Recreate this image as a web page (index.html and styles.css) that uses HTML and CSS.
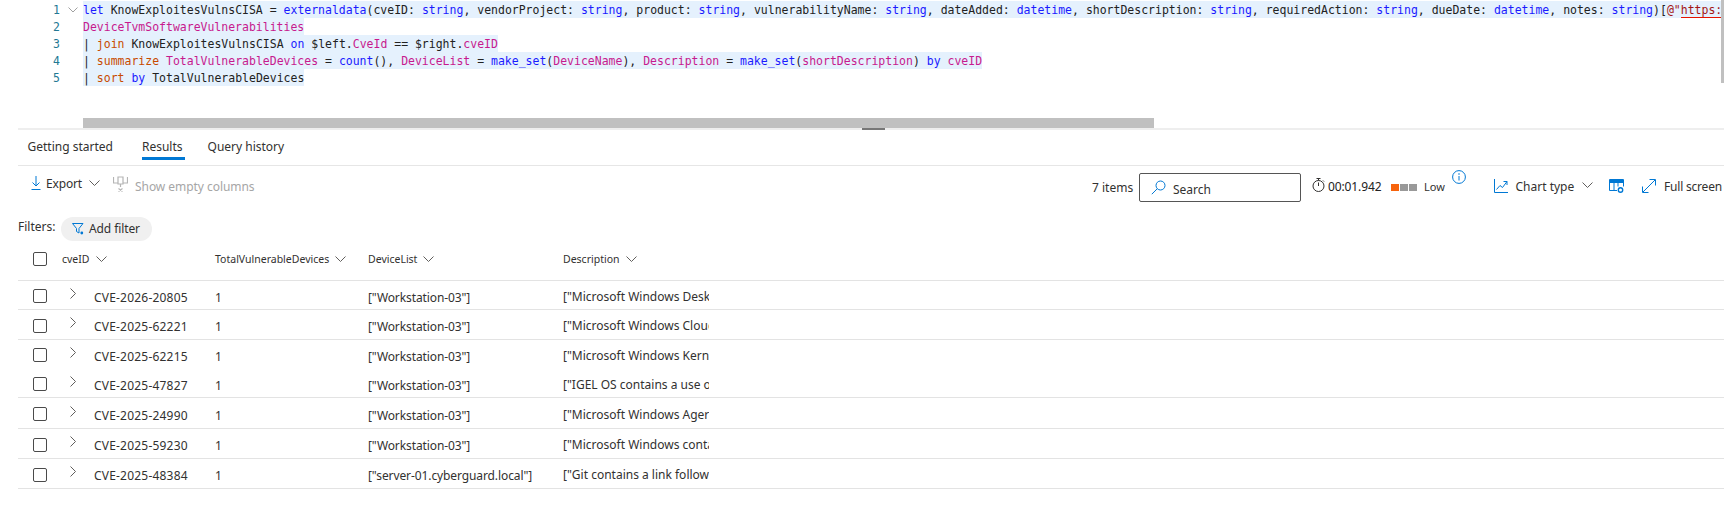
FILE: index.html
```html
<!DOCTYPE html>
<html lang="en">
<head>
<meta charset="utf-8">
<title>Advanced hunting</title>
<link rel="stylesheet" href="styles.css">
</head>
<body>
<div class="editor">
  <div class="code">
    <div class="line"><span class="num">1</span><svg class="fold" width="10" height="6" viewBox="0 0 10 6"><path d="M.5.5 5 5 9.5.5" fill="none" stroke="#a0a0a0"/></svg><div class="src"><span class="sel"><span class="b">let</span> <span class="k">KnowExploitesVulnsCISA</span> = <span class="b">externaldata</span>(<span class="k">cveID</span>: <span class="b">string</span>, <span class="k">vendorProject</span>: <span class="b">string</span>, <span class="k">product</span>: <span class="b">string</span>, <span class="k">vulnerabilityName</span>: <span class="b">string</span>, <span class="k">dateAdded</span>: <span class="b">datetime</span>, <span class="k">shortDescription</span>: <span class="b">string</span>, <span class="k">requiredAction</span>: <span class="b">string</span>, <span class="k">dueDate</span>: <span class="b">datetime</span>, <span class="k">notes</span>: <span class="b">string</span>)[<span class="r">@"</span><span class="url">https:</span></span></div></div>
    <div class="line"><span class="num">2</span><span class="nofold"></span><div class="src"><span class="sel"><span class="m">DeviceTvmSoftwareVulnerabilities</span></span></div></div>
    <div class="line"><span class="num">3</span><span class="nofold"></span><div class="src"><span class="sel">| <span class="o">join</span> KnowExploitesVulnsCISA <span class="b">on</span> $left.<span class="m">CveId</span> == $right.<span class="m">cveID</span></span></div></div>
    <div class="line"><span class="num">4</span><span class="nofold"></span><div class="src"><span class="sel">| <span class="o">summarize</span> <span class="m">TotalVulnerableDevices</span> = <span class="b">count</span>(), <span class="m">DeviceList</span> = <span class="b">make_set</span>(<span class="m">DeviceName</span>), <span class="m">Description</span> = <span class="b">make_set</span>(<span class="m">shortDescription</span>) <span class="b">by</span> <span class="m">cveID</span></span></div></div>
    <div class="line"><span class="num">5</span><span class="nofold"></span><div class="src"><span class="sel">| <span class="o">sort</span> <span class="b">by</span> TotalVulnerableDevices</span></div></div>
  </div>
  <div class="vscroll"></div>
</div>
<div class="hscroll"></div>
<div class="sash"><div class="sash-handle"></div></div>

<div class="tabs">
  <span class="tab tab-first">Getting started</span>
  <span class="tab tab-active">Results</span>
  <span class="tab">Query history</span>
</div>

<div class="toolbar">
  <svg class="ic-export" width="10" height="14" viewBox="0 0 10 14"><path d="M5 0v10M1.5 6.5 5 10l3.500-3.500M.5 13.500h9" fill="none" stroke="#0078d4"/></svg>
  <span class="export-label">Export</span>
  <svg class="chev-export" width="11" height="6" viewBox="0 0 11 6"><path d="M.5.5 5.500 5.500 10.500.5" fill="none" stroke="#605e5c"/></svg>
  <svg class="ic-pin" width="15" height="16" viewBox="0 0 15 16"><path d="M.5 1v6h4M14.500 1v6h-4M5 1h5v7H5zM7.500 8v3M5.500 12.500l4 3M9.500 12.500l-4 3" fill="none" stroke="#b5b5b5" stroke-width="1.200"/></svg>
  <span class="empty-label">Show empty columns</span>
  <span class="count">7 items</span>
  <div class="search">
    <svg width="15" height="15" viewBox="0 0 15 15"><circle cx="9.500" cy="5.500" r="4.500" fill="none" stroke="#0078d4"/><path d="M6.200 8.800.8 14.200" stroke="#0078d4" fill="none"/></svg>
    <span class="search-label">Search</span>
  </div>
  <svg class="ic-timer" width="13" height="14" viewBox="0 0 13 14"><circle cx="6.500" cy="8" r="5.500" fill="none" stroke="#323130"/><path d="M6.500 4.500V8M4.500.5h4M6.500.5v2M11 2.500l1 1" fill="none" stroke="#323130"/></svg>
  <span class="time">00:01.942</span>
  <span class="sq sq-on"></span><span class="sq"></span><span class="sq"></span>
  <span class="low">Low</span>
  <svg class="ic-info" width="14" height="14" viewBox="0 0 14 14"><circle cx="7" cy="7" r="6.400" fill="none" stroke="#0078d4"/><path d="M7 6v4.500" stroke="#0078d4"/><circle cx="7" cy="4" r=".8" fill="#0078d4"/></svg>
  <svg class="ic-chart" width="14" height="14" viewBox="0 0 14 14"><path d="M.5 0v13.500H14M2.500 10.500l3.500-4 2.500 2 4.500-6M9.500 2.500h3.500V6" fill="none" stroke="#0078d4"/></svg>
  <span class="chart-label">Chart type</span>
  <svg class="chev-chart" width="11" height="6" viewBox="0 0 11 6"><path d="M.5.5 5.500 5.500 10.500.5" fill="none" stroke="#605e5c"/></svg>
  <svg class="ic-cols" width="15" height="14" viewBox="0 0 15 14"><path d="M.5 11.500V.5h14v7M.5 3.500h14M5 3.500v8M9 3.500v4M.5 11.500H8" fill="none" stroke="#0078d4"/><rect x="1" y="1" width="13" height="2" fill="#0078d4"/><circle cx="11.500" cy="11" r="2.200" fill="none" stroke="#0078d4" stroke-width="1.400"/></svg>
  <svg class="ic-expand" width="14" height="14" viewBox="0 0 14 14"><path d="M1 13 13 1M7.500.5h6v6M.5 7.500v6h6" fill="none" stroke="#0078d4"/></svg>
  <span class="full-label">Full screen</span>
</div>

<div class="filters">
  <span class="filters-label">Filters:</span>
  <div class="pill">
    <svg width="12" height="12" viewBox="0 0 12 12"><path d="M.5.500h10.500L7 5.500V10L4.500 8.500V5.500z" fill="none" stroke="#0078d4"/><circle cx="9.800" cy="10" r="1.400" fill="#0078d4"/></svg>
    <span>Add filter</span>
  </div>
</div>

<div class="table">
  <div class="thead">
    <span class="box box-head"></span>
    <div class="th c-id"><span>cveID</span><svg width="11" height="6" viewBox="0 0 11 6"><path d="M.5.5 5.500 5.500 10.500.5" fill="none" stroke="#605e5c"/></svg></div>
    <div class="th c-total"><span>TotalVulnerableDevices</span><svg width="11" height="6" viewBox="0 0 11 6"><path d="M.5.5 5.500 5.500 10.500.5" fill="none" stroke="#605e5c"/></svg></div>
    <div class="th c-list"><span>DeviceList</span><svg width="11" height="6" viewBox="0 0 11 6"><path d="M.5.5 5.500 5.500 10.500.5" fill="none" stroke="#605e5c"/></svg></div>
    <div class="th c-desc"><span>Description</span><svg width="11" height="6" viewBox="0 0 11 6"><path d="M.5.5 5.500 5.500 10.500.5" fill="none" stroke="#605e5c"/></svg></div>
  </div>
  <div class="row h29">
    <span class="box"></span><svg class="exp" width="6" height="11" viewBox="0 0 6 11"><path d="M.5.500 5.500 5.500.5 10.500" fill="none" stroke="#605e5c"/></svg>
    <span class="cell d-id">CVE-2026-20805</span><span class="cell d-total">1</span><span class="cell d-list">["Workstation-03"]</span><span class="cell d-desc">["Microsoft Windows Desktop Window Manager</span>
  </div>
  <div class="row">
    <span class="box"></span><svg class="exp" width="6" height="11" viewBox="0 0 6 11"><path d="M.5.500 5.500 5.500.5 10.500" fill="none" stroke="#605e5c"/></svg>
    <span class="cell d-id">CVE-2025-62221</span><span class="cell d-total">1</span><span class="cell d-list">["Workstation-03"]</span><span class="cell d-desc">["Microsoft Windows Cloud Files Mini Filter</span>
  </div>
  <div class="row h29 no-line">
    <span class="box"></span><svg class="exp" width="6" height="11" viewBox="0 0 6 11"><path d="M.5.500 5.500 5.500.5 10.500" fill="none" stroke="#605e5c"/></svg>
    <span class="cell d-id">CVE-2025-62215</span><span class="cell d-total">1</span><span class="cell d-list">["Workstation-03"]</span><span class="cell d-desc">["Microsoft Windows Kernel contains a race</span>
  </div>
  <div class="row h29">
    <span class="box"></span><svg class="exp" width="6" height="11" viewBox="0 0 6 11"><path d="M.5.500 5.500 5.500.5 10.500" fill="none" stroke="#605e5c"/></svg>
    <span class="cell d-id">CVE-2025-47827</span><span class="cell d-total">1</span><span class="cell d-list">["Workstation-03"]</span><span class="cell d-desc">["IGEL OS contains a use of a key past its</span>
  </div>
  <div class="row h31">
    <span class="box"></span><svg class="exp" width="6" height="11" viewBox="0 0 6 11"><path d="M.5.500 5.500 5.500.5 10.500" fill="none" stroke="#605e5c"/></svg>
    <span class="cell d-id">CVE-2025-24990</span><span class="cell d-total">1</span><span class="cell d-list">["Workstation-03"]</span><span class="cell d-desc">["Microsoft Windows Agere Modem Driver</span>
  </div>
  <div class="row">
    <span class="box"></span><svg class="exp" width="6" height="11" viewBox="0 0 6 11"><path d="M.5.500 5.500 5.500.5 10.500" fill="none" stroke="#605e5c"/></svg>
    <span class="cell d-id">CVE-2025-59230</span><span class="cell d-total">1</span><span class="cell d-list">["Workstation-03"]</span><span class="cell d-desc">["Microsoft Windows contains an improper</span>
  </div>
  <div class="row">
    <span class="box"></span><svg class="exp" width="6" height="11" viewBox="0 0 6 11"><path d="M.5.500 5.500 5.500.5 10.500" fill="none" stroke="#605e5c"/></svg>
    <span class="cell d-id">CVE-2025-48384</span><span class="cell d-total">1</span><span class="cell d-list">["server-01.cyberguard.local"]</span><span class="cell d-desc">["Git contains a link following vulnerability</span>
  </div>
</div>
</body>
</html>
```

FILE: styles.css
```css
* { box-sizing: border-box; }
html, body { margin: 0; padding: 0; background: #fff; }
body {
  width: 1724px;
  height: 514px;
  overflow: hidden;
  font-family: "Noto Sans", "Open Sans", sans-serif;
  font-size: 12px;
  color: #323130;
}
svg { display: block; flex: none; }

/* editor */
.editor { display: flex; height: 118px; }
.code {
  flex: 1;
  min-width: 0;
  overflow: hidden;
  padding-top: 1px;
  font-family: "DejaVu Sans Mono", "Liberation Mono", monospace;
  font-size: 11.49px;
  color: #222;
}
.vscroll { width: 3px; height: 83px; background: #c0c0c0; }
.line { display: flex; align-items: center; height: 17px; white-space: pre; }
.num { flex: none; width: 60px; padding-top: 1px; text-align: right; color: #237893; }
.fold { margin: 0 5px 0 8px; }
.nofold { width: 23px; flex: none; }
.src { flex: none; }
.sel { display: block; height: 17px; line-height: 19px; background: #e5f1fd; }
.b { color: #1a1aff; }
.k { color: #222; }
.m { color: #c71a8e; }
.o { color: #c84b00; }
.r { color: #a31515; }
.url { color: #a31515; border-bottom: 1px solid #e51400; }
.hscroll { height: 10px; width: 1071px; margin-left: 83px; background: #c0c0c0; }
.sash { height: 2px; margin-left: 18px; background: #eee; }
.sash-handle { width: 23px; height: 2px; margin-left: 844px; background: #777; }

/* tabs */
.tabs {
  display: flex;
  height: 36px;
  margin-left: 18px;
  border-bottom: 1px solid #e6e6e6;
}
.tab { height: 30px; margin-right: 23px; line-height: 33px; white-space: nowrap; }
.tab-first { margin-left: 9.5px; margin-right: 29px; }
.tab-active { height: 30px; border-bottom: 3px solid #0078d4; padding-right: 2px; }

/* toolbar */
.toolbar { display: flex; align-items: center; height: 39px; padding-bottom: 3px; white-space: nowrap; }
.toolbar > * { flex: none; }
.ic-export { margin: -2px 0 0 31px; }
.export-label { margin: -2px 0 0 5px; width: 37px; letter-spacing: -.15px; }
.chev-export { margin: -3px 0 0 6px; }
.ic-pin { margin-left: 13px; }
.empty-label { margin: 4px 0 0 7px; width: 957px; color: #a6a6a6; letter-spacing: -.05px; }
.count { width: 47px; margin-top: 6px; }
.search {
  display: flex;
  align-items: center;
  width: 162px;
  height: 29px;
  margin-top: 7px;
  padding-left: 11px;
  border: 1px solid #555;
  border-radius: 2px;
}
.search-label { margin: 3px 0 0 7px; }
.ic-timer { margin: 2px 0 0 11px; }
.time { margin: 5px 0 0 3px; width: 63px; color: #222; letter-spacing: -.12px; }
.sq { width: 8px; height: 7px; margin: 6px 1px 0 0; background: #999; }
.sq-on { background: #f7630c; }
.low { margin: 5px 0 0 6px; width: 28px; font-size: 11px; }
.ic-info { margin: -14px 0 0 0; }
.ic-chart { margin: 3px 0 0 28px; }
.chart-label { margin: 5px 0 0 7.5px; width: 58px; }
.chev-chart { margin: 1px 0 0 8px; }
.ic-cols { margin: 3px 0 0 16.5px; }
.ic-expand { margin: 3px 0 0 18px; }
.full-label { margin: 5px 0 0 8px; letter-spacing: -.2px; }

/* filters */
.filters { display: flex; align-items: center; height: 24px; margin-top: 12px; padding-left: 18px; }
.filters-label { width: 43px; margin-top: -5px; }
.pill {
  display: flex;
  align-items: center;
  width: 91px;
  height: 24px;
  padding-left: 11px;
  border-radius: 12px;
  background: #f0f0f0;
}
.pill span { margin: -2px 0 0 5px; letter-spacing: -.1px; }

/* table */
.table { margin-left: 18px; }
.thead, .row { display: flex; align-items: center; border-bottom: 1px solid #e3e3e3; }
.thead { height: 40px; padding-bottom: 3px; }
.row { height: 30px; }
.h29 { height: 29px; }
.h31 { height: 31px; }
.no-line { border-bottom-color: transparent; }
.box {
  flex: none;
  width: 14px;
  height: 14px;
  margin: 2px 0 0 15px;
  border: 1px solid #4a4a4a;
  border-radius: 2px;
}
.box-head { margin-top: 0; }
.th { display: flex; align-items: center; gap: 6px; font-size: 10.5px; }
.c-id { width: 153px; margin-left: 15px; }
.c-total { width: 153px; }
.c-list { width: 195px; }
.exp { margin: -4px 0 0 23px; }
.cell { margin-top: 4px; white-space: nowrap; overflow: hidden; }
.d-id { width: 121px; margin-left: 18px; letter-spacing: .2px; }
.d-total { width: 153px; }
.d-list { width: 195px; letter-spacing: -.1px; }
.d-desc { width: 146px; margin-top: 2px; }
```
